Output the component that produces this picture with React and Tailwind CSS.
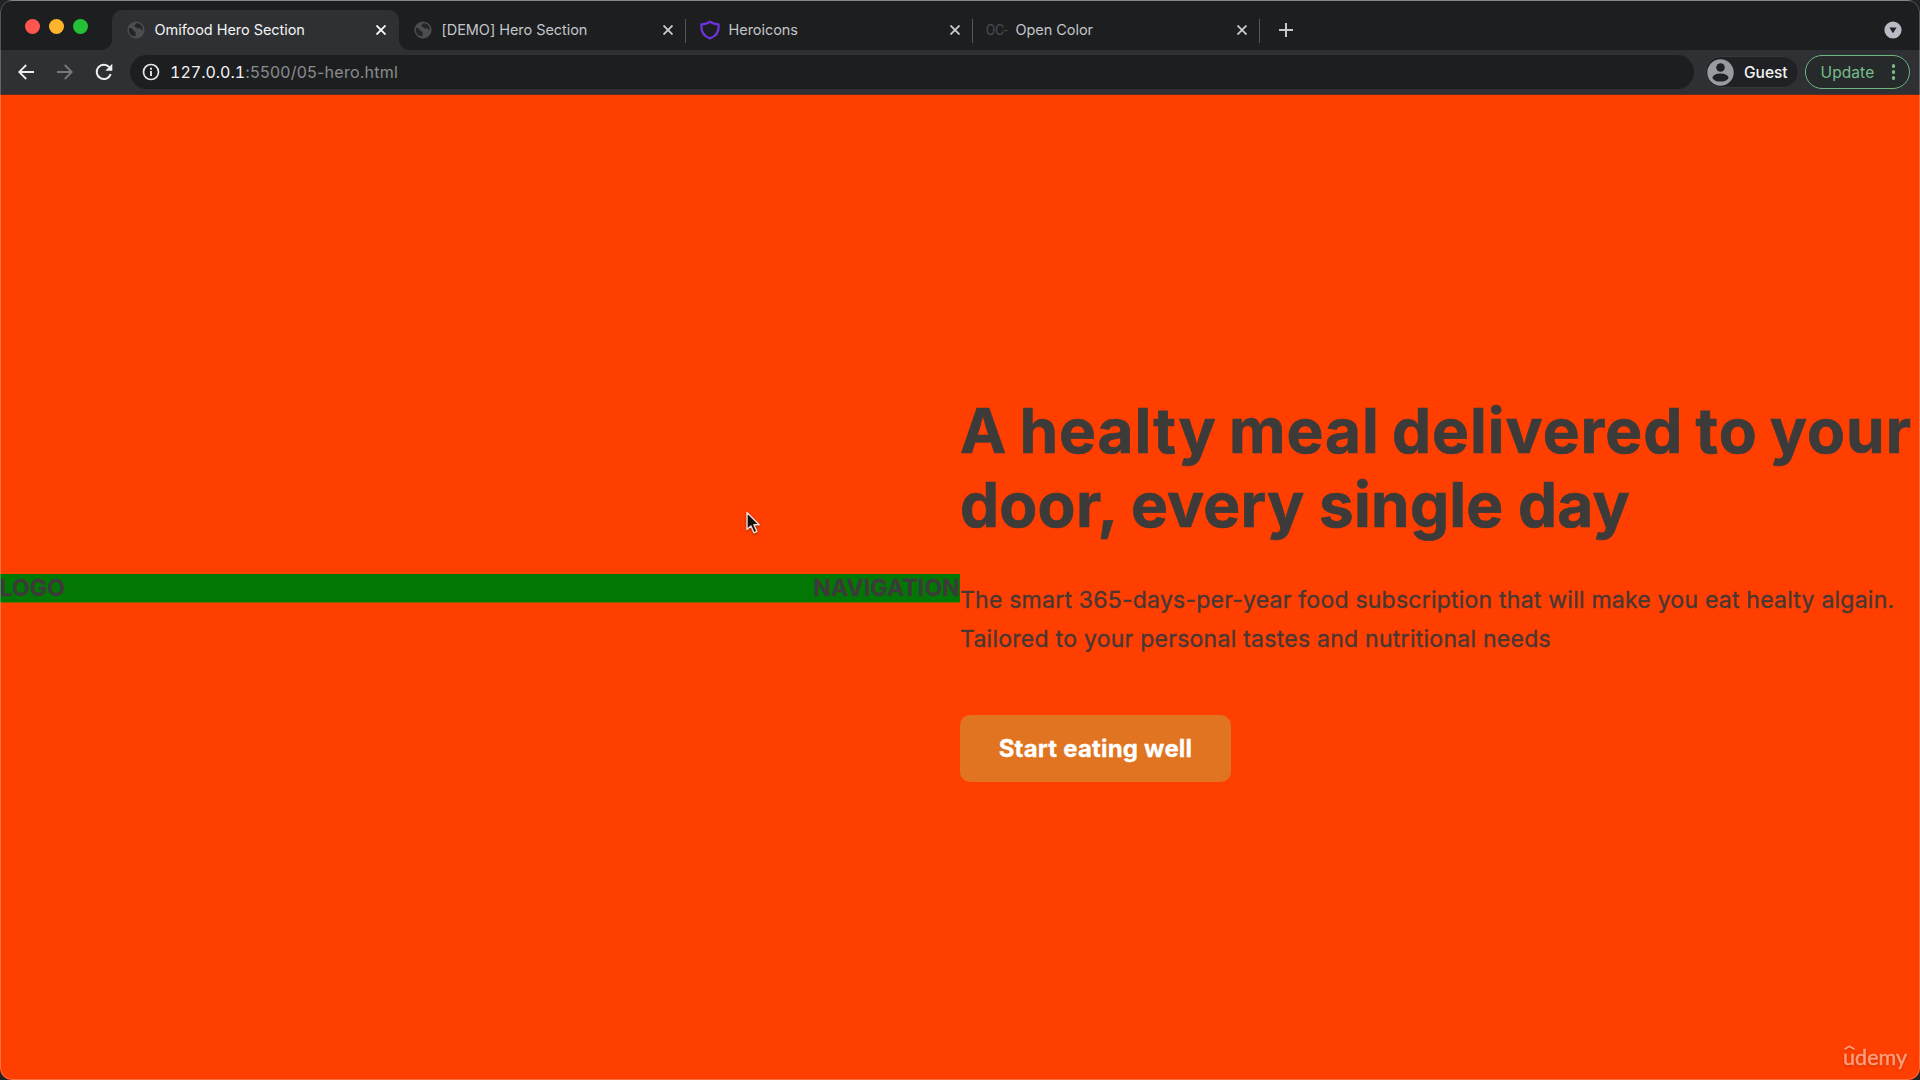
import React from "react";

const Globe = () => (
  <svg viewBox="0 0 18 18" className="size-[18px] shrink-0">
    <circle cx="9" cy="9" r="8.6" fill="#4b4d50" />
    <path
      d="M2.2 6.4c1.2.9 2.6.7 3.3 1.6.8 1 .2 1.9 1.4 2.1 1.1.2 1.7.5 1.7 1.6v3.4C4.600 15.500 1.900 12.800 1.900 9c0-.9.100-1.800.3-2.600zM9.300 2.300c-.9.7-.5 1.500-1.500 1.800-.9.300-.9 1.300.1 1.500 1.200.3 1.500 1.100 2.500 1.600 1.100.6 2.100-.3 3.100.4.9.7 1.100 1.900 2.100 1.900.5-2-.2-4.100-1.600-5.500-1.300-1.200-3-1.800-4.700-1.700z"
      fill="#232527"
    />
  </svg>
);

const Shield = () => (
  <svg viewBox="0 0 20 20" className="size-5 shrink-0" fill="none" stroke="#6d35dd" strokeWidth="2.2" strokeLinejoin="round">
    <path d="M10 1.700C7.700 3.600 4.800 4.300 1.500 4.400c-.9 7.200 2.500 11.800 8.500 14 6-2.200 9.400-6.800 8.500-14C15.200 4.300 12.300 3.600 10 1.700z" />
  </svg>
);

const Close = ({ className }) => (
  <svg viewBox="0 0 10 10" className={`size-[10px] shrink-0 ${className}`} stroke="currentColor" strokeWidth="1.8">
    <path d="M.5.5l9 9M9.500.5l-9 9" />
  </svg>
);

const tabs = [
  { title: "Omifood Hero Section", icon: <Globe />, active: true },
  { title: "[DEMO] Hero Section", icon: <Globe /> },
  { title: "Heroicons", icon: <Shield />, divider: true },
  { title: "Open Color", icon: <span className="font-['Roboto'] text-[14px] leading-none tracking-[-0.3px] text-[#454c53]">OC-</span>, divider: true },
];

function Tab({ title, icon, active, divider }) {
  return (
    <div
      className={`relative flex h-10 w-[287px] shrink-0 items-center pl-[13.500px] pr-[13.500px] ${
        active ? "rounded-t-[10px] bg-[#2f3034] text-[#f4f5f6]" : "text-[#c3c6ca]"
      }`}
    >
      {active && (
        <>
          <span className="absolute -left-2.5 bottom-0 size-2.5 bg-[radial-gradient(circle_at_0_0,transparent_9.500px,#2f3034_10px)]" />
          <span className="absolute -right-2.5 bottom-0 size-2.5 bg-[radial-gradient(circle_at_100%_0,transparent_9.500px,#2f3034_10px)]" />
        </>
      )}
      {divider && <span className="absolute -left-px top-[9px] h-6 w-px bg-[#55575b]" />}
      <span className="flex w-5 shrink-0 justify-center">{icon}</span>
      <span className="ml-[9px] flex-1 whitespace-nowrap text-[14.500px] leading-5 tracking-[-0.05px]">{title}</span>
      <Close className={active ? "text-white" : "text-[#c9ccd0]"} />
    </div>
  );
}

function TabStrip() {
  return (
    <div className="flex h-[50px] items-end border-t border-[#5d5e60] bg-[#1d1e20] pl-[25px]">
      <div className="mb-[16.500px] flex w-[87px] gap-[9px]">
        <span className="size-[15px] rounded-full bg-[#fd564f]" />
        <span className="size-[15px] rounded-full bg-[#fdb42c]" />
        <span className="size-[15px] rounded-full bg-[#24c138]" />
      </div>
      {tabs.map((t) => (
        <Tab key={t.title} {...t} />
      ))}
      <div className="relative flex h-10 flex-1 items-center justify-between pl-[19px] pr-[18px]">
        <span className="absolute -left-px top-[9px] h-6 w-px bg-[#55575b]" />
        <svg viewBox="0 0 14 14" className="size-3.5" stroke="#c5c8cc" strokeWidth="2">
          <path d="M7 0v14M0 7h14" />
        </svg>
        <svg viewBox="0 0 18 18" className="size-[18px]">
          <circle cx="9" cy="9" r="8.600" fill="#b9bcc4" />
          <path d="M5.400 6.600h7.200L9 12.200z" fill="#1d1e20" />
        </svg>
      </div>
    </div>
  );
}

function Toolbar() {
  return (
    <div className="flex h-[45px] items-center border-b border-[#5b2d20] bg-[#2f3034] pl-[18px] pr-[10px]">
      <svg viewBox="0 0 16 16" className="size-4 shrink-0" fill="none" stroke="#eceef0" strokeWidth="1.800">
        <path d="M16 8H1.600M8.200 1L1.200 8l7 7" />
      </svg>
      <svg viewBox="0 0 16 16" className="ml-[23px] size-4 shrink-0" fill="none" stroke="#77797c" strokeWidth="1.800">
        <path d="M0 8h14.400M7.800 1l7 7-7 7" />
      </svg>
      <svg viewBox="0 0 18 18" className="ml-[21.500px] size-[18px] shrink-0" fill="none" stroke="#eceef0" strokeWidth="2">
        <path d="M15.700 11.200A7.200 7.200 0 1 1 14.300 4.100" />
        <path d="M17.300.8v7h-7z" fill="#eceef0" stroke="none" />
      </svg>
      <div className="ml-[17px] flex h-[34px] flex-1 items-center rounded-full bg-[#1d1e20] pl-[12.500px]">
        <svg viewBox="0 0 18 18" className="size-[18px] shrink-0" fill="none" stroke="#e3e5e8" strokeWidth="1.700">
          <circle cx="9" cy="9" r="7.500" />
          <path d="M9 8v5M9 4.800v1.900" strokeWidth="1.900" />
        </svg>
        <span className="ml-[10px] whitespace-nowrap text-base leading-none text-[#8b8c8e]">
          <span className="tabular-nums tracking-[0px] text-[#f1f2f3]">127.0.0.1</span>
          <span className="tracking-[0.250px]">:5500/05-hero.html</span>
        </span>
      </div>
      <div className="ml-[11px] flex h-8 w-[94px] items-center rounded-full border border-[#37383b] bg-[#202124] pl-px">
        <svg viewBox="0 0 27 27" className="size-[27px] shrink-0">
          <circle cx="13.500" cy="13.500" r="13.200" fill="#989ca1" />
          <circle cx="13.500" cy="8.500" r="4.300" fill="#202124" />
          <ellipse cx="13.500" cy="18.600" rx="8" ry="4" fill="#202124" />
        </svg>
        <span className="ml-[10px] pt-px text-[15.500px] font-medium leading-none text-[#f3f4f5]">Guest</span>
      </div>
      <div className="ml-[6px] flex h-[34px] w-[105px] items-center justify-between rounded-full border-[1.500px] border-[#6cb582] bg-[#262a2b] pl-[14.500px] pr-[14px] text-[#78bd8c]">
        <span className="pt-px text-[15.500px] leading-none tracking-[0.100px]">Update</span>
        <span className="flex flex-col gap-[2.500px]">
          <i className="size-[3.500px] rounded-full bg-current" />
          <i className="size-[3.500px] rounded-full bg-current" />
          <i className="size-[3.500px] rounded-full bg-current" />
        </span>
      </div>
    </div>
  );
}

function Page() {
  return (
    <main className="relative grid flex-1 grid-cols-2 items-center bg-[#ff3f00] pt-px text-[#3c3b3a]">
      <header className="flex h-[29px] items-center justify-between border-b border-[#7d6405] bg-[#037703] pt-0.5 text-[23px] font-bold leading-none tracking-[0.150px] [-webkit-text-stroke:0.300px_currentColor]">
        <div className="-ml-[0.500px] tracking-[0.100px]">LOGO</div>
        <nav>NAVIGATION</nav>
      </header>
      <section>
        <h1 className="whitespace-nowrap text-[62px] font-bold leading-[74.500px] [-webkit-text-stroke:0.700px_currentColor]">
          <span className="block tracking-[1px] [word-spacing:-3.500px]">A healty meal delivered to your</span>
          <span className="block tracking-[0.250px] [word-spacing:-0.500px]">door, every single day</span>
        </h1>
        <p className="mt-[38.500px] whitespace-nowrap text-[23px] leading-[38.600px] text-[#493733] [-webkit-text-stroke:0.350px_currentColor]">
          <span className="block tracking-[0.230px]">The smart 365-days-per-year food subscription that will make you eat healty algain.</span>
          <span className="block tracking-[0.260px]">Tailored to your personal tastes and nutritional needs</span>
        </p>
        <a className="mt-[57px] flex h-[67px] w-[271px] items-center justify-center rounded-[10px] bg-[#e07420] pt-px text-[24px] font-bold leading-none tracking-[0.200px] text-white [-webkit-text-stroke:0.300px_currentColor]">
          Start eating well
        </a>
      </section>
      <svg viewBox="0 0 18 26" className="absolute left-[744px] top-[415px] h-[26px] w-[18px] drop-shadow-[0_1px_1px_rgba(0,0,0,0.4)]">
        <path d="M3 2.500v17l3.900-3.600 3 6.900 3-1.300-3-6.700h5.300z" fill="#111" stroke="#f3dcd6" strokeWidth="1.400" strokeLinejoin="round" />
      </svg>
      <div className="absolute bottom-[11px] right-[13px] font-['Lato'] text-[21.500px] leading-6 text-[#ff9c79] drop-shadow-[0_1px_1px_rgba(90,20,0,0.35)] [-webkit-text-stroke:0.500px_currentColor]">
        <svg viewBox="0 0 11 5" className="absolute left-px top-0 h-[5px] w-[11px]" fill="none" stroke="currentColor" strokeWidth="1.800">
          <path d="M.5 4.300l5-3 5 3" />
        </svg>
        udemy
      </div>
    </main>
  );
}

export default function App() {
  return (
    <div className="h-[1080px] w-[1920px] overflow-hidden bg-[#242424] font-['Inter',sans-serif]">
      <div className="relative flex h-full flex-col overflow-hidden rounded-[12px]">
        <TabStrip />
        <Toolbar />
        <Page />
        <div className="pointer-events-none absolute inset-0 rounded-[12px] border border-white/25" />
      </div>
    </div>
  );
}
